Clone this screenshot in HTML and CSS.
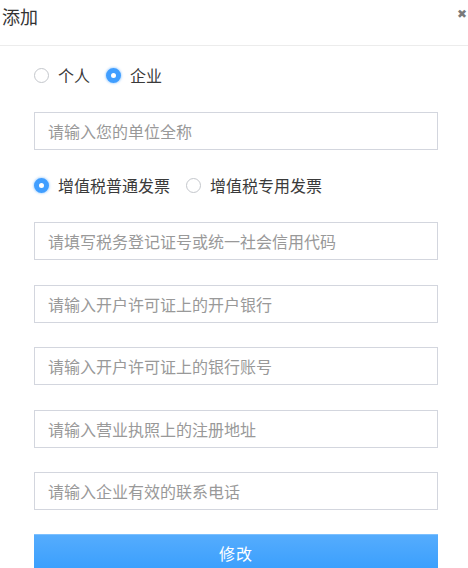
FILE: index.html
```html
<!DOCTYPE html>
<html lang="zh-CN">
<head>
  <meta charset="UTF-8">
  <title>添加</title>
  <meta name="viewport" content="width=device-width, initial-scale=1.0">
  <link rel="stylesheet" href="styles.css">
</head>
<body>
  <div class="dialog">
    <div class="dialog-header">
      <span class="dialog-title">添加</span>
      <span class="dialog-close">&#x2716;</span>
    </div>

    <div class="dialog-body">
      <div class="radio-row first">
        <label class="radio"><span class="radio-dot"></span>个人</label>
        <label class="radio checked"><span class="radio-dot"></span>企业</label>
      </div>

      <div class="field"><input type="text" placeholder="请输入您的单位全称"></div>

      <div class="radio-row second">
        <label class="radio checked"><span class="radio-dot"></span>增值税普通发票</label>
        <label class="radio"><span class="radio-dot"></span>增值税专用发票</label>
      </div>

      <div class="field"><input type="text" placeholder="请填写税务登记证号或统一社会信用代码"></div>
      <div class="field"><input type="text" placeholder="请输入开户许可证上的开户银行"></div>
      <div class="field"><input type="text" placeholder="请输入开户许可证上的银行账号"></div>
      <div class="field"><input type="text" placeholder="请输入营业执照上的注册地址"></div>
      <div class="field"><input type="text" placeholder="请输入企业有效的联系电话"></div>

      <button class="submit">修改</button>
    </div>
  </div>
</body>
</html>
```

FILE: styles.css
```css
body {
  margin: 0;
  font-family: "Noto Sans CJK SC", "Noto Sans", sans-serif;
  background-color: #fff;
  color: #333;
  overflow: hidden;
}
.dialog-header {
  height: 45px;
  border-bottom: 1px solid #ececec;
  display: flex;
  justify-content: space-between;
  align-items: flex-start;
  padding: 0 1px 0 2px;
}
.dialog-title {
  font-size: 18px;
  line-height: 32px;
  color: #333;
}
.dialog-close {
  font-size: 12px;
  color: #7a7a7a;
  margin-top: 6px;
  line-height: 14px;
}
.dialog-body {
  padding: 0 30px 0 34px;
}
.radio-row {
  display: flex;
  align-items: center;
  height: 22px;
  font-size: 16px;
  color: #3a3a3a;
}
.radio-row.first {
  margin-top: 18px;
}
.radio-row.second {
  margin-top: 24px;
}
.radio {
  display: flex;
  align-items: center;
  margin-right: 16px;
}
.radio-dot {
  width: 13px;
  height: 13px;
  border: 1px solid #c4c7cc;
  border-radius: 50%;
  margin-right: 9px;
  box-sizing: content-box;
}
.radio.checked .radio-dot {
  width: 5px;
  height: 5px;
  border: 5px solid #409eff;
  background-color: #fff;
  box-shadow: 0 0 2px 1px rgba(64, 158, 255, 0.35);
}
.field {
  margin-top: 26px;
}
.field + .field {
  margin-top: 24.5px;
}
.field input {
  display: block;
  width: 100%;
  height: 38px;
  box-sizing: border-box;
  border: 1px solid #d3d6de;
  border-radius: 0;
  padding: 0 13px;
  font-family: inherit;
  font-size: 16px;
  outline: none;
}
.field input::placeholder {
  color: #999;
}
.submit {
  display: block;
  width: 100%;
  height: 36px;
  margin-top: 24px;
  border: none;
  border-top: 1px solid #7cc0ff;
  background: linear-gradient(#55acfd, #3a9ffd);
  color: #fff;
  font-family: inherit;
  font-size: 16px;
  letter-spacing: 1px;
  cursor: pointer;
}
```
